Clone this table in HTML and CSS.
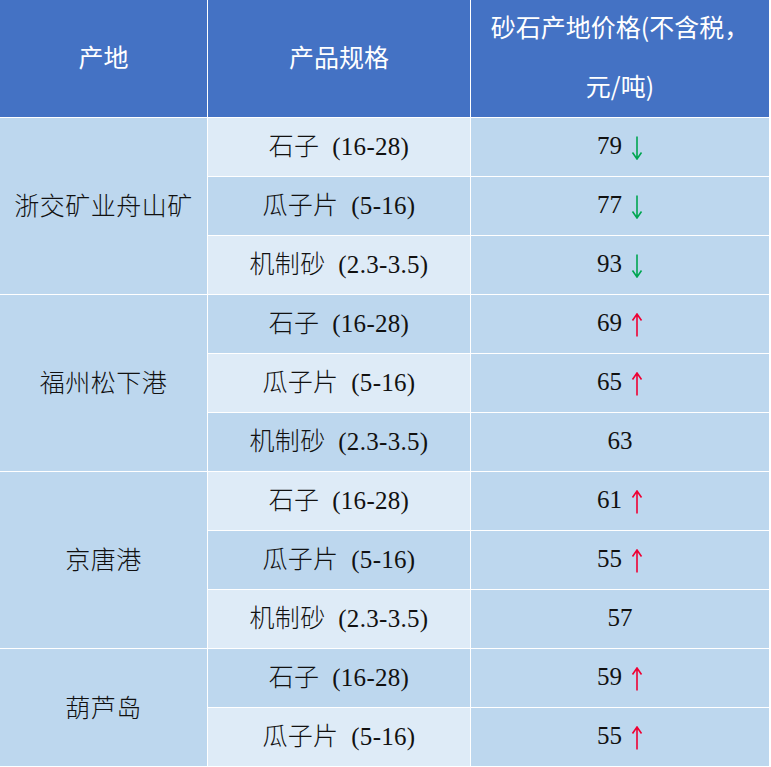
FILE: index.html
```html
<!DOCTYPE html>
<html lang="zh-CN">
<head>
<meta charset="utf-8">
<title>砂石产地价格</title>
<link rel="stylesheet" href="styles.css">
</head>
<body>
<div class="grid">
  <div class="hd">产地</div>
  <div class="hd">产品规格</div>
  <div class="hd hd-price">砂石产地价格(不含税，<br>元/吨)</div>

  <div class="origin span3">浙交矿业舟山矿</div>
  <div class="spec light">石子&ensp;(16-28)</div>
  <div class="price">79<svg class="arr down" viewBox="0 0 12 24"><path d="M6 0.5V23M1.5 16.5L6 23L10.5 16.5"/></svg></div>
  <div class="spec">瓜子片&ensp;(5-16)</div>
  <div class="price">77<svg class="arr down" viewBox="0 0 12 24"><path d="M6 0.5V23M1.5 16.5L6 23L10.5 16.5"/></svg></div>
  <div class="spec light">机制砂&ensp;(2.3-3.5)</div>
  <div class="price">93<svg class="arr down" viewBox="0 0 12 24"><path d="M6 0.5V23M1.5 16.5L6 23L10.5 16.5"/></svg></div>

  <div class="origin span3">福州松下港</div>
  <div class="spec">石子&ensp;(16-28)</div>
  <div class="price">69<svg class="arr up" viewBox="0 0 12 24"><path d="M6 1V23.5M1.5 7.5L6 1L10.5 7.5"/></svg></div>
  <div class="spec light">瓜子片&ensp;(5-16)</div>
  <div class="price">65<svg class="arr up" viewBox="0 0 12 24"><path d="M6 1V23.5M1.5 7.5L6 1L10.5 7.5"/></svg></div>
  <div class="spec">机制砂&ensp;(2.3-3.5)</div>
  <div class="price">63</div>

  <div class="origin span3">京唐港</div>
  <div class="spec light">石子&ensp;(16-28)</div>
  <div class="price">61<svg class="arr up" viewBox="0 0 12 24"><path d="M6 1V23.5M1.5 7.5L6 1L10.5 7.5"/></svg></div>
  <div class="spec">瓜子片&ensp;(5-16)</div>
  <div class="price">55<svg class="arr up" viewBox="0 0 12 24"><path d="M6 1V23.5M1.5 7.5L6 1L10.5 7.5"/></svg></div>
  <div class="spec light">机制砂&ensp;(2.3-3.5)</div>
  <div class="price">57</div>

  <div class="origin span2">葫芦岛</div>
  <div class="spec">石子&ensp;(16-28)</div>
  <div class="price">59<svg class="arr up" viewBox="0 0 12 24"><path d="M6 1V23.5M1.5 7.5L6 1L10.5 7.5"/></svg></div>
  <div class="spec light">瓜子片&ensp;(5-16)</div>
  <div class="price">55<svg class="arr up" viewBox="0 0 12 24"><path d="M6 1V23.5M1.5 7.5L6 1L10.5 7.5"/></svg></div>
</div>
</body>
</html>
```
FILE: styles.css
```css
html, body {
  margin: 0;
  padding: 0;
  background: #ffffff;
}
.grid {
  display: grid;
  grid-template-columns: 207px 262px 298px;
  grid-template-rows: 117px;
  grid-auto-rows: 58px;
  gap: 1px;
  width: 770px;
  padding-right: 1px;
  box-sizing: border-box;
  background: #ffffff;
  overflow: hidden;
  height: 767px;
}
.grid > div {
  display: flex;
  align-items: center;
  justify-content: center;
  text-align: center;
  color: #111;
  font-size: 25px;
  line-height: 30px;
  box-sizing: border-box;
}
.hd {
  background: #4472c4;
  color: #ffffff !important;
  font-family: "Noto Sans CJK SC", "Noto Sans", sans-serif;
  font-size: 25px;
  padding-bottom: 5px;
}
.hd-price {
  line-height: 59px !important;
  padding-bottom: 5px;
}
.origin {
  background: #bdd7ee;
  font-family: "Liberation Serif", "Noto Sans CJK SC", serif;
  font-weight: 300;
  letter-spacing: 0.5px;
  padding-top: 2px;
}
.span3 { grid-row: span 3; }
.span2 { grid-row: span 2; }
.spec {
  background: #bdd7ee;
  font-family: "Liberation Serif", "Noto Sans CJK SC", serif;
  font-weight: 300;
  letter-spacing: 0.3px;
  padding-bottom: 0px;
}
.spec.light {
  background: #deebf7;
}
.price {
  background: #bdd7ee;
  font-family: "Liberation Serif", serif;
  padding-bottom: 2px;
}
.arr {
  width: 12px;
  height: 24px;
  margin-left: 9px;
  margin-top: 3px;
  fill: none;
  stroke-width: 1.6;
  stroke-linecap: butt;
  stroke-linejoin: miter;
}
.arr.down { stroke: #00a651; }
.arr.up { stroke: #ee0033; }
```
